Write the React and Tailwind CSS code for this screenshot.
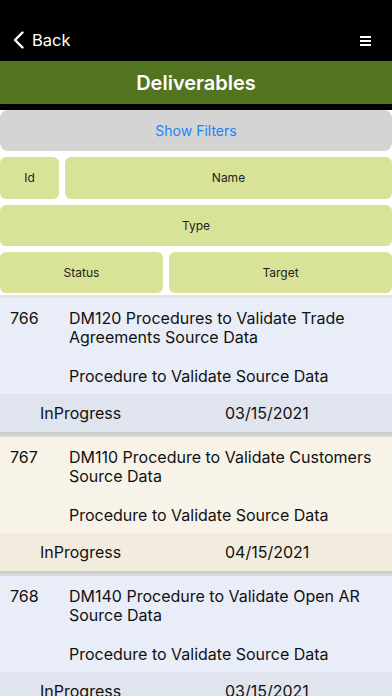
const items = [
  {
    id: 766,
    name: 'DM120 Procedures to Validate Trade Agreements Source Data',
    type: 'Procedure to Validate Source Data',
    status: 'InProgress',
    target: '03/15/2021',
    bg: 'bg-[#e9edf7]',
    bar: 'bg-[#dfe4ee]',
  },
  {
    id: 767,
    name: 'DM110 Procedure to Validate Customers Source Data',
    type: 'Procedure to Validate Source Data',
    status: 'InProgress',
    target: '04/15/2021',
    bg: 'bg-[#f8f3e9]',
    bar: 'bg-[#f2ecdf]',
  },
  {
    id: 768,
    name: 'DM140 Procedure to Validate Open AR Source Data',
    type: 'Procedure to Validate Source Data',
    status: 'InProgress',
    target: '03/15/2021',
    bg: 'bg-[#e9edf7]',
    bar: 'bg-[#dfe4ee]',
  },
];

const FilterCell = ({ label, className = '' }) => (
  <div className={`rounded-[6px] bg-[#d9e398] flex items-center justify-center text-[12px] text-[#222] ${className}`}>
    {label}
  </div>
);

const Row = ({ item }) => (
  <div className={item.bg}>
    <div className="flex pt-[11px] pb-[8px] text-[16px] leading-[19px] text-[#111]">
      <div className="w-[69px] shrink-0 pl-[10px]">{item.id}</div>
      <div className="pr-4">
        <div>{item.name}</div>
        <div className="mt-[20px]">{item.type}</div>
      </div>
    </div>
    <div className={`${item.bar} h-[38px] flex items-center text-[16px] text-[#111]`}>
      <div className="w-[225px] pl-[40px]">{item.status}</div>
      <div>{item.target}</div>
    </div>
    <div className="h-[5px] bg-gradient-to-b from-[#c9c9c9] to-[#dcdcdc]" />
  </div>
);

export default function App() {
  return (
    <div className="w-[392px] h-[696px] overflow-hidden bg-white" style={{ fontFamily: 'Inter, "Noto Sans", sans-serif' }}>
      {/* Nav bar */}
      <div className="bg-black h-[61px] flex items-end pb-[11px] pl-[13px] pr-[12px] text-white">
        <div className="flex items-center gap-[8px]">
          <svg width="11" height="18" viewBox="0 0 11 18" fill="none">
            <path d="M9.5 1.5 L2 9 L9.5 16.5" stroke="white" strokeWidth="2.4" strokeLinecap="round" strokeLinejoin="round" />
          </svg>
          <span className="text-[16.5px] leading-[20px]">Back</span>
        </div>
        <div className="ml-auto pr-[9px] pb-[4px] flex flex-col gap-[2px]">
          <div className="w-[11px] h-[2px] bg-white" />
          <div className="w-[11px] h-[2px] bg-white" />
          <div className="w-[11px] h-[2px] bg-white" />
        </div>
      </div>

      {/* Title */}
      <div className="bg-[#52731f] h-[43px] flex items-center justify-center text-white text-[20px] font-semibold">
        Deliverables
      </div>

      {/* Show filters */}
      <div className="bg-black pt-[6px]">
        <div className="bg-white">
          <div className="h-[41px] rounded-[8px] bg-[#d4d4d4] flex items-center justify-center text-[14px] text-[#1a82fb]">
            Show Filters
          </div>
        </div>
      </div>

      {/* Filter grid */}
      <div className="pt-[6px] pb-[2px] flex flex-col gap-[6px]">
        <div className="flex gap-[6px] h-[42px]">
          <FilterCell label="Id" className="w-[59px]" />
          <FilterCell label="Name" className="flex-1" />
        </div>
        <FilterCell label="Type" className="h-[41px]" />
        <div className="flex gap-[6px] h-[41px]">
          <FilterCell label="Status" className="w-[163px]" />
          <FilterCell label="Target" className="flex-1" />
        </div>
      </div>
      <div className="h-[3px] bg-[#e4e4e4]" />

      {/* List */}
      <div>
        {items.map((item) => (
          <Row key={item.id} item={item} />
        ))}
      </div>
    </div>
  );
}
